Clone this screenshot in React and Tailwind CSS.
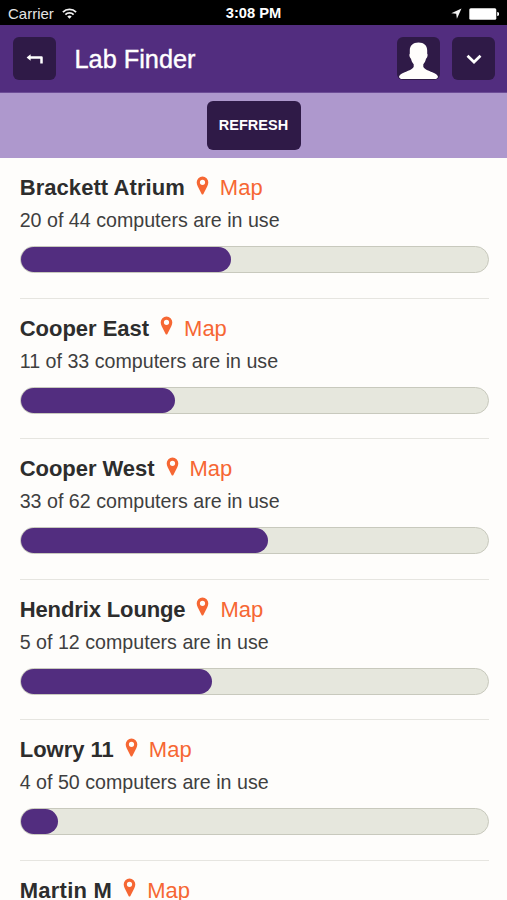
import React from "react";

const labs = [
  { id: 1, name: "Brackett Atrium", used: 20, total: 44, tracking: "tracking-[0.06px]" },
  { id: 2, name: "Cooper East", used: 11, total: 33, tracking: "tracking-[-0.02px]" },
  { id: 3, name: "Cooper West", used: 33, total: 62, tracking: "tracking-[-0.04px]" },
  { id: 4, name: "Hendrix Lounge", used: 5, total: 12, tracking: "tracking-[-0.12px]" },
  { id: 5, name: "Lowry 11", used: 4, total: 50, tracking: "tracking-normal" },
  { id: 6, name: "Martin M", used: 9, total: 24, tracking: "tracking-[0.25px]" },
];

const StatusBar = () => (
  <div className="h-[25px] shrink-0 bg-black text-white grid grid-cols-3 items-center pl-2 pr-[8px] pt-[2px]">
    <div className="flex items-center gap-[8px] text-[#e4e4e4]">
      <span className="text-[15px] leading-[17px]">Carrier</span>
      <svg width="15" height="11" viewBox="0 0 16 12" fill="none" stroke="#f2f2f2" strokeWidth="2" className="-mt-px">
        <path d="M0.8 4.400a10.200 10.200 0 0 1 14.400 0" />
        <path d="M3.500 7.200a6.400 6.400 0 0 1 9 0" />
        <path d="M8 11.800 5.600 9.400a3.400 3.400 0 0 1 4.800 0Z" fill="#f2f2f2" stroke="none" />
      </svg>
    </div>
    <span className="text-[14.7px] leading-[17px] font-bold text-center whitespace-nowrap">3:08 PM</span>
    <div className="flex items-center justify-end gap-[7px]">
      <svg width="11" height="11" viewBox="0 0 11 11" fill="#f2f2f2">
        <path d="M10.500.5.300 5.200l4.900.5.700 5Z" />
      </svg>
      <svg width="30" height="12" viewBox="0 0 30 12" fill="#fff">
        <rect x="0.300" y="0.200" width="27" height="11.600" rx="1.500" />
        <path d="M28.200 4a2 2 0 0 1 0 4Z" />
      </svg>
    </div>
  </div>
);

const Header = () => (
  <header className="h-[68px] shrink-0 bg-[#522d7f] border-b border-[#6d4c97] flex items-center pl-[13px] pr-3">
    <button className="size-[43px] rounded-md bg-[#2f1a47] flex items-center justify-center" aria-label="Back">
      <svg width="18" height="12" viewBox="0 0 18 12" fill="none" stroke="#fff" strokeWidth="2.500" strokeLinejoin="round">
        <path d="M3 4.500h12.500v6" />
        <path d="M4.600 1.300v6.400L.600 4.500Z" fill="#fff" stroke="none" />
      </svg>
    </button>
    <h1 className="ml-[18.500px] text-[25.300px] leading-[30px] text-white [-webkit-text-stroke:0.400px_white]">Lab Finder</h1>
    <button className="ml-auto size-[43px] rounded-md bg-[#2f1a47] flex items-end justify-center overflow-hidden" aria-label="Profile">
      <svg width="43" height="43" viewBox="0 0 43 43" fill="#fffdfc">
        <path d="M21.500 5.400c-5.600 0-8.700 3-8.700 8.200v3.200c-.6.5-.5 1.800 0 3.200.3.900.7 1.500 1.200 1.800.4 2.200 1.300 3.900 2.700 5.400v2.600c-1.300 2.700-5.200 3.900-9 5.500-3.300 1.300-5.300 2.600-5.700 4.400.3 1.500 1.500 2.300 3.500 2.300h32c2 0 3.200-.8 3.500-2.300-.4-1.800-2.400-3.100-5.700-4.400-3.800-1.600-7.700-2.800-9-5.500v-2.600c1.400-1.500 2.300-3.200 2.700-5.400.5-.3.900-.9 1.200-1.800.5-1.400.6-2.700 0-3.200v-3.200c0-5.200-3.100-8.200-8.700-8.200Z" />
      </svg>
    </button>
    <button className="ml-[12px] size-[43px] rounded-md bg-[#2f1a47] flex items-center justify-center" aria-label="Menu">
      <svg width="16" height="10" viewBox="0 0 16 10" fill="none" stroke="#fff" strokeWidth="2.700">
        <path d="M1.500 1.700 8 8l6.500-6.300" />
      </svg>
    </button>
  </header>
);

const PinIcon = () => (
  <svg width="13" height="19" viewBox="0 0 13 19" fill="#f66733" className="relative -top-[3px]">
    <path
      fillRule="evenodd"
      d="M6.500.500A5.800 5.800 0 0 0 .7 6.300c0 1.400.4 2.500 1 3.900l3.900 7.700c.4.800 1.400.8 1.800 0l3.900-7.700c.6-1.400 1-2.500 1-3.900A5.800 5.800 0 0 0 6.500.500Zm0 3.200a2.600 2.600 0 1 1 0 5.200 2.600 2.600 0 0 1 0-5.200Z"
    />
  </svg>
);

const LabRow = ({ lab }) => {
  // whole percents only, rounded down
  const percent = Math.floor((lab.used / lab.total) * 100);

  return (
    <li className="h-[140.55px] shrink-0 border-b border-[#e6e5e0] pt-[17px]">
      <div className="flex items-center h-[26px] text-[22px] leading-[26px]">
        <h2 className={`font-bold text-[#2d2d2d] ${lab.tracking}`}>{lab.name}</h2>
        <a href="#map" className="flex items-center ml-[11px] text-[#f66733]">
          <PinIcon />
          <span className="ml-[11px]">Map</span>
        </a>
      </div>
      <p className="mt-[7px] text-[19.65px] leading-[24px] text-[#3f3f3f]">
        {lab.used} of {lab.total} computers are in use
      </p>
      {/* usage bar */}
      <div className="mt-[14px] h-[27px] rounded-full border border-[#c8c9bd] bg-[#e6e7dd]">
        <div className="h-full rounded-full bg-[#522d7f]" style={{ width: `${percent}%` }} />
      </div>
    </li>
  );
};

export default function App() {
  return (
    <div className="h-[900px] w-full overflow-hidden flex flex-col bg-[#fefdfb] font-['Liberation_Sans',Arial,sans-serif]">
      <StatusBar />
      <Header />
      <div className="h-[65px] shrink-0 bg-[#ae98cd] flex items-center justify-center">
        <button className="h-[49px] w-[94px] rounded-md bg-[#2f1a47] text-white text-[14.5px] font-bold">REFRESH</button>
      </div>
      <ul className="flex-1 min-h-0 overflow-hidden flex flex-col pl-[19.7px] pr-[18.300px]">
        {labs.map((lab) => (
          <LabRow key={lab.id} lab={lab} />
        ))}
      </ul>
    </div>
  );
}
